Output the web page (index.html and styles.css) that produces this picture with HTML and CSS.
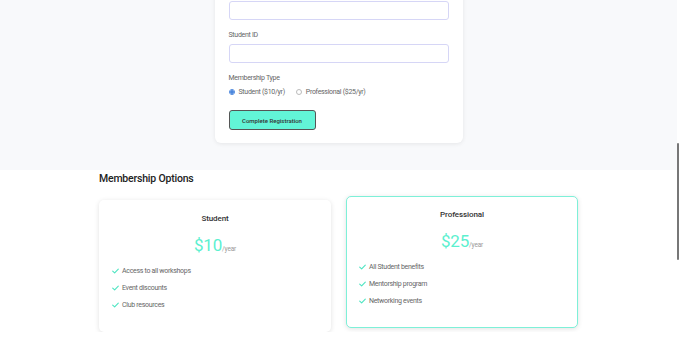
FILE: index.html
```html
<!DOCTYPE html>
<html lang="en">
<head>
  <meta charset="UTF-8">
  <meta name="viewport" content="width=device-width, initial-scale=1.0">
  <title>Club Registration</title>
  <link rel="stylesheet" href="styles.css">
</head>
<body>

  <section class="register">
    <form class="register-card">
      <input type="text" class="field" name="full-name">

      <label class="field-label" for="student-id">Student ID</label>
      <input type="text" class="field" id="student-id" name="student-id">

      <span class="field-label type-label">Membership Type</span>
      <div class="radio-row">
        <label class="radio-option">
          <span class="radio checked"></span>
          Student ($10/yr)
        </label>
        <label class="radio-option">
          <span class="radio"></span>
          Professional ($25/yr)
        </label>
      </div>

      <button type="submit" class="submit-btn">Complete Registration</button>
    </form>
  </section>

  <section class="options">
    <h2>Membership Options</h2>

    <div class="plans">
      <div class="plan">
        <h3>Student</h3>
        <p class="price">$10<span>/year</span></p>
        <ul>
          <li><svg viewBox="0 0 10 8"><path d="M1 4.2 L3.8 6.8 L9 1.2"/></svg>Access to all workshops</li>
          <li><svg viewBox="0 0 10 8"><path d="M1 4.2 L3.8 6.8 L9 1.2"/></svg>Event discounts</li>
          <li><svg viewBox="0 0 10 8"><path d="M1 4.2 L3.8 6.8 L9 1.2"/></svg>Club resources</li>
        </ul>
      </div>

      <div class="plan plan-active">
        <h3>Professional</h3>
        <p class="price">$25<span>/year</span></p>
        <ul>
          <li><svg viewBox="0 0 10 8"><path d="M1 4.2 L3.8 6.8 L9 1.2"/></svg>All Student benefits</li>
          <li><svg viewBox="0 0 10 8"><path d="M1 4.2 L3.8 6.8 L9 1.2"/></svg>Mentorship program</li>
          <li><svg viewBox="0 0 10 8"><path d="M1 4.2 L3.8 6.8 L9 1.2"/></svg>Networking events</li>
        </ul>
      </div>
    </div>
  </section>

  <div class="scroll-thumb"></div>

</body>
</html>
```

FILE: styles.css
```css
html {
  overflow: hidden;
}

body {
  font-family: Roboto, "Noto Sans", Arial, sans-serif;
  margin: 0 3px 0 0;
  padding: 0;
  background-color: #fff;
  color: #555;
  font-size: 7px;
  line-height: 10px;
  letter-spacing: -0.3px;
}

.register {
  background-color: #f8f9fb;
  padding-bottom: 27px;
  display: flex;
  justify-content: center;
}

.register-card {
  width: 220px;
  margin-top: -13px;
  padding: 14px 14px 13px;
  background-color: #fff;
  border-radius: 6px;
  box-shadow: 0 1px 4px rgba(0, 0, 0, 0.08);
  display: flex;
  flex-direction: column;
  align-items: flex-start;
}

.field {
  box-sizing: border-box;
  width: 100%;
  height: 19px;
  margin: 0;
  border: 1px solid #d6d6f6;
  border-radius: 3px;
  background: #fff;
}

.field-label {
  margin: 10px 0 4px;
  color: #666;
}

.type-label {
  margin-bottom: 4px;
}

.radio-row {
  display: flex;
  gap: 11px;
  color: #666;
}

.radio-option {
  display: flex;
  align-items: center;
  gap: 4px;
}

.radio {
  box-sizing: border-box;
  width: 6px;
  height: 6px;
  border: 1px solid #bbb;
  border-radius: 50%;
}

.radio.checked {
  border-color: #4a86dd;
  background: radial-gradient(circle, #4a86dd 0 55%, #fff 62%);
}

.submit-btn {
  margin-top: 13px;
  width: 87px;
  height: 20px;
  padding: 0;
  background-color: #62f5d7;
  border: 1px solid #555;
  border-radius: 3px;
  font-family: inherit;
  font-size: 6px;
  font-weight: 500;
  letter-spacing: 0;
  color: #333;
  cursor: pointer;
}

.options {
  width: 479px;
  margin: 0 auto;
}

.options h2 {
  margin: 2px 0 14px;
  font-size: 10.5px;
  line-height: 14px;
  font-weight: 500;
  letter-spacing: -0.2px;
  color: #222;
}

.plans {
  display: grid;
  grid-template-columns: 1fr 1fr;
  gap: 15px;
}

.plan {
  background-color: #fff;
  border: 1px solid transparent;
  border-radius: 5px;
  box-shadow: 0 1px 5px rgba(0, 0, 0, 0.12);
  padding: 12px 12px 21px;
}

.plan-active {
  border-color: #7ef0d8;
  transform: translateY(-4px);
}

.plan h3 {
  margin: 0;
  text-align: center;
  font-size: 8px;
  line-height: 12px;
  font-weight: 500;
  letter-spacing: -0.1px;
  color: #333;
}

.price {
  margin: 10px 0 0;
  text-align: center;
  font-size: 17px;
  line-height: 20px;
  font-weight: 400;
  letter-spacing: -0.2px;
  color: #5cf0cf;
}

.price span {
  font-size: 6.5px;
  color: #999;
}

.plan ul {
  list-style: none;
  margin: 7px 0 0;
  padding: 0;
}

.plan li {
  display: flex;
  align-items: center;
  gap: 3px;
  margin-bottom: 7px;
  color: #666;
}

.plan li:last-child {
  margin-bottom: 0;
}

.plan li svg {
  width: 7px;
  height: 6px;
  fill: none;
  stroke: #4fe5c2;
  stroke-width: 1.6;
  stroke-linecap: round;
  stroke-linejoin: round;
}

.scroll-thumb {
  position: fixed;
  right: 1px;
  top: 143px;
  width: 2px;
  height: 117px;
  background-color: #777;
  border-radius: 1px;
}
```
